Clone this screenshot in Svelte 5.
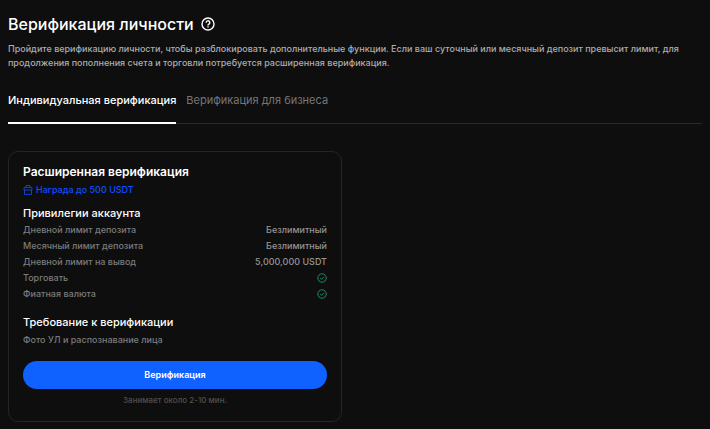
<script lang="ts">
  let tab = $state('personal');

  const limits = [
    { name: 'Дневной лимит депозита', value: 'Безлимитный' },
    { name: 'Месячный лимит депозита', value: 'Безлимитный' },
    { name: 'Дневной лимит на вывод', value: '5,000,000 USDT' },
    { name: 'Торговать', value: null },
    { name: 'Фиатная валюта', value: null }
  ];
</script>

<main>
  <header>
    <h1>Верификация личности</h1>
    <button class="help" aria-label="Справка">
      <svg width="14" height="14" viewBox="0 0 14 14" fill="none" stroke="currentColor">
        <circle cx="7" cy="7" r="6" stroke-width="1.4" />
        <path d="M5.2 5.7a1.8 1.8 0 1 1 2.7 1.5c-.6.4-.9.6-.9 1.2" stroke-width="1.4" />
        <path d="M7 9.2v1.4" stroke-width="1.4" />
      </svg>
    </button>
  </header>

  <p class="intro">
    Пройдите верификацию личности, чтобы разблокировать дополнительные функции. Если ваш суточный
    или месячный депозит превысит лимит, для продолжения пополнения счета и торговли потребуется
    расширенная верификация.
  </p>

  <div class="tabs" role="tablist">
    <button
      role="tab"
      aria-selected={tab === 'personal'}
      class:active={tab === 'personal'}
      onclick={() => (tab = 'personal')}>Индивидуальная верификация</button
    >
    <button
      role="tab"
      aria-selected={tab === 'business'}
      class:active={tab === 'business'}
      onclick={() => (tab = 'business')}>Верификация для бизнеса</button
    >
  </div>

  <div class="cards">
    <section class="card">
      <h2>Расширенная верификация</h2>
      <p class="reward">
        <svg width="10" height="10" viewBox="0 0 10 10" fill="none" stroke="currentColor">
          <path d="M1.5 5v4.5h7V5M1 2.5h8V5H1zM3 2.5v-2h4v2" stroke-width="0.8" />
        </svg>
        Награда до 500 USDT
      </p>

      <h3>Привилегии аккаунта</h3>
      <dl>
        {#each limits as limit}
          <div class="row">
            <dt>{limit.name}</dt>
            <dd>
              {#if limit.value}
                {limit.value}
              {:else}
                <svg width="10" height="10" viewBox="0 0 10 10" fill="none" stroke="currentColor" role="img" aria-label="Доступно">
                  <circle cx="5" cy="5" r="4.2" stroke-width="0.9" />
                  <path d="M3.2 5.1l1.3 1.2 2.3-2.4" stroke-width="0.9" />
                </svg>
              {/if}
            </dd>
          </div>
        {/each}
      </dl>

      <h3>Требование к верификации</h3>
      <p class="requirement">Фото УЛ и распознавание лица</p>

      <button class="verify">Верификация</button>
      <p class="note">Занимает около 2-10 мин.</p>
    </section>
  </div>
</main>

<style>
  :global(body) {
    background: #0e0e0e;
    font-family: Inter, 'Liberation Sans', sans-serif;
  }

  main {
    padding: 12px 8px 8px;
    color: #fff;
  }

  h1,
  h2,
  h3,
  p,
  dl,
  dd {
    margin: 0;
  }

  button {
    padding: 0;
    border: 0;
    background: none;
    color: inherit;
    font-family: inherit;
    cursor: pointer;
  }

  svg {
    display: block;
  }

  header {
    display: flex;
    align-items: center;
    gap: 7px;
  }

  h1 {
    font-size: 16px;
    line-height: 24px;
    font-weight: 500;
  }

  .intro {
    margin-top: 6px;
    font-size: 9px;
    line-height: 14px;
    font-weight: 500;
    color: #adadad;
  }

  .tabs {
    display: flex;
    gap: 10px;
    margin-top: 20px;
    border-bottom: 1px solid #2b2b2e;
  }

  .tabs button {
    margin-bottom: -1px;
    padding: 2px 0 14px;
    border-bottom: 2px solid transparent;
    font-size: 11px;
    line-height: 16px;
    color: #76767a;
  }

  .tabs .active {
    border-color: #fff;
    font-weight: 500;
    color: #fff;
  }

  .cards {
    display: grid;
    grid-template-columns: 1fr 1fr;
    gap: 26px;
    margin-top: 27px;
  }

  .card {
    padding: 12px 14px 14px;
    border: 1px solid #242429;
    border-radius: 10px;
  }

  h2 {
    font-size: 12px;
    line-height: 16px;
    font-weight: 600;
  }

  .reward {
    display: flex;
    align-items: center;
    gap: 3px;
    margin-top: 3px;
    font-size: 9px;
    line-height: 14px;
    font-weight: 500;
    color: #0f4fff;
  }

  h3 {
    margin-top: 8px;
    font-size: 11px;
    line-height: 16px;
    font-weight: 500;
  }

  .row {
    display: flex;
    align-items: center;
    justify-content: space-between;
    font-size: 9px;
    line-height: 16px;
    font-weight: 500;
    color: #7c7c7c;
  }

  dl {
    margin-top: 1px;
  }

  dd {
    color: #949494;
  }

  dd svg {
    color: #1f9a68;
  }

  dl + h3 {
    margin-top: 12px;
  }

  .requirement {
    margin-top: 2px;
    font-size: 9px;
    line-height: 16px;
    font-weight: 500;
    color: #7c7c7c;
  }

  .verify {
    display: block;
    width: 100%;
    margin-top: 13px;
    border-radius: 14px;
    background: #0f62ff;
    font-size: 9px;
    line-height: 28px;
    font-weight: 600;
  }

  .note {
    margin-top: 4px;
    font-size: 8px;
    line-height: 14px;
    font-weight: 500;
    text-align: center;
    color: #505050;
  }
</style>
